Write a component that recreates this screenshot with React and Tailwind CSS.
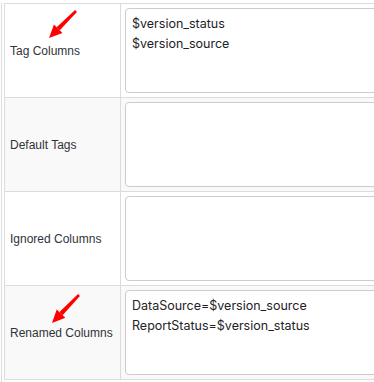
import React from "react";

const rows = [
  { label: "Tag Columns", value: "$version_status\n$version_source", gray: false },
  { label: "Default Tags", value: "", gray: true },
  { label: "Ignored Columns", value: "", gray: false },
  { label: "Renamed Columns", value: "DataSource=$version_source\nReportStatus=$version_status", gray: true },
];

function Arrow({ x1, y1, x2, y2 }) {
  const dx = x2 - x1;
  const dy = y2 - y1;
  const len = Math.hypot(dx, dy);
  const ux = dx / len;
  const uy = dy / len;
  const hl = 13;
  const hw = 6;
  const bx = x2 - ux * hl;
  const by = y2 - uy * hl;
  const px = -uy;
  const py = ux;
  const tw = 1.3;
  const nw = 2.2;
  const shaft = [
    [x1 + px * tw, y1 + py * tw],
    [bx + px * nw, by + py * nw],
    [bx - px * nw, by - py * nw],
    [x1 - px * tw, y1 - py * tw],
  ];
  const head = [
    [x2, y2],
    [bx + px * hw, by + py * hw],
    [bx - px * hw, by - py * hw],
  ];
  const pts = (a) => a.map((p) => p.join(",")).join(" ");
  return (
    <>
      <polygon points={pts(shaft)} fill="#ff0000" />
      <polygon points={pts(head)} fill="#ff0000" />
    </>
  );
}

export default function App() {
  return (
    <div className="relative w-[374px] h-[382px] overflow-hidden bg-white">
      <div className="ml-[1px] h-full border-l border-[#dcdcdc] pl-[2px]">
        <div className="mt-[3px] w-[640px] border-t border-l border-[#dcdcdc]">
          {rows.map((r) => (
            <div
              key={r.label}
              className={`flex border-b border-[#dcdcdc] ${r.gray ? "bg-[#f9f9f9]" : "bg-white"}`}
            >
              <div className="flex w-[116px] shrink-0 items-center border-r border-[#dcdcdc] pl-[5px] text-[12px] text-[#2f3339] [font-family:'Liberation_Sans',Arial,sans-serif]">
                {r.label}
              </div>
              <div className="flex-1 p-[4px]">
                <div className="h-[85px] w-[500px] whitespace-pre rounded-[4px] border border-[#cccccc] bg-white pl-[6px] pt-[5px] text-[12.5px] leading-[20px] text-[#1e2226] [font-family:Inter,sans-serif]">
                  {r.value}
                </div>
              </div>
            </div>
          ))}
        </div>
      </div>
      <svg className="pointer-events-none absolute left-0 top-0" width="374" height="382">
        <Arrow x1={76} y1={11} x2={49} y2={38} />
        <Arrow x1={79} y1={295} x2={52} y2={323} />
      </svg>
    </div>
  );
}
